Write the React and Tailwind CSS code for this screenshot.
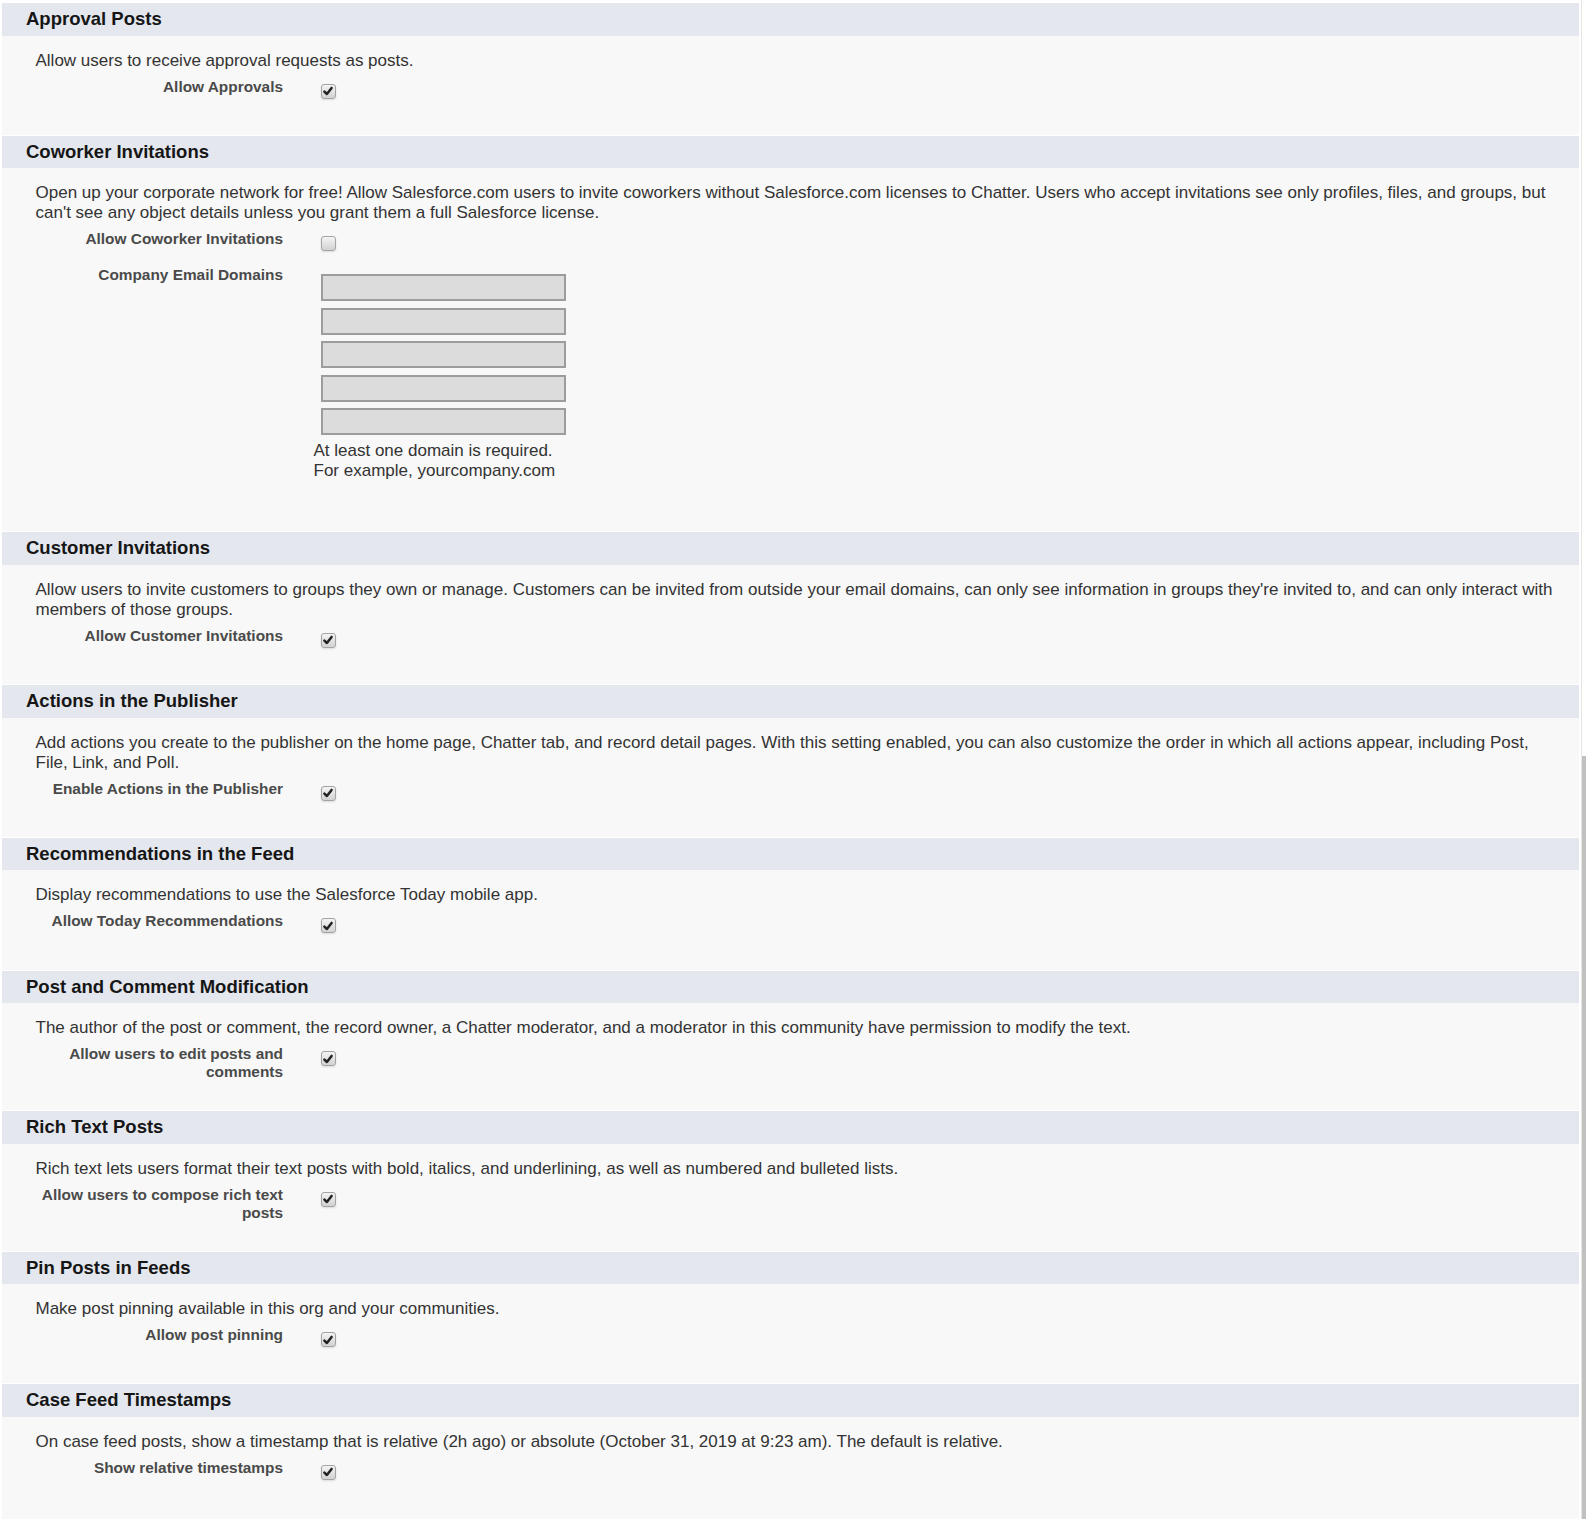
import React from 'react'

const sections = [
  {
    title: 'Approval Posts',
    desc: 'Allow users to receive approval requests as posts.',
    fields: [{ label: 'Allow Approvals', checked: true }],
  },
  {
    title: 'Coworker Invitations',
    desc: "Open up your corporate network for free! Allow Salesforce.com users to invite coworkers without Salesforce.com licenses to Chatter. Users who accept invitations see only profiles, files, and groups, but can't see any object details unless you grant them a full Salesforce license.",
    fields: [
      { label: 'Allow Coworker Invitations', checked: false },
      { label: 'Company Email Domains', domains: true },
    ],
    pb: 'pb-[50px]',
  },
  {
    title: 'Customer Invitations',
    desc: "Allow users to invite customers to groups they own or manage. Customers can be invited from outside your email domains, can only see information in groups they're invited to, and can only interact with members of those groups.",
    fields: [{ label: 'Allow Customer Invitations', checked: true }],
  },
  {
    title: 'Actions in the Publisher',
    desc: 'Add actions you create to the publisher on the home page, Chatter tab, and record detail pages. With this setting enabled, you can also customize the order in which all actions appear, including Post, File, Link, and Poll.',
    fields: [{ label: 'Enable Actions in the Publisher', checked: true }],
  },
  {
    title: 'Recommendations in the Feed',
    desc: 'Display recommendations to use the Salesforce Today mobile app.',
    fields: [{ label: 'Allow Today Recommendations', checked: true }],
  },
  {
    title: 'Post and Comment Modification',
    desc: 'The author of the post or comment, the record owner, a Chatter moderator, and a moderator in this community have permission to modify the text.',
    fields: [{ label: 'Allow users to edit posts and comments', checked: true }],
    pb: 'pb-[29px]',
  },
  {
    title: 'Rich Text Posts',
    desc: 'Rich text lets users format their text posts with bold, italics, and underlining, as well as numbered and bulleted lists.',
    fields: [{ label: 'Allow users to compose rich text posts', checked: true }],
    pb: 'pb-[29px]',
  },
  {
    title: 'Pin Posts in Feeds',
    desc: 'Make post pinning available in this org and your communities.',
    fields: [{ label: 'Allow post pinning', checked: true }],
  },
  {
    title: 'Case Feed Timestamps',
    desc: 'On case feed posts, show a timestamp that is relative (2h ago) or absolute (October 31, 2019 at 9:23 am). The default is relative.',
    fields: [{ label: 'Show relative timestamps', checked: true }],
    pb: 'pb-[36px]',
  },
]

function Checkbox({ checked }) {
  return (
    <span className="mt-[6px] ml-[7px] flex h-[15px] w-[15px] items-center justify-center rounded-[3px] border border-[#a3a3a3] bg-gradient-to-b from-[#f4f4f4] to-[#d2d2d2] shadow-[0_1px_2px_rgba(0,0,0,0.12)]">
      {checked && (
        <svg width="12" height="12" viewBox="0 0 12 12">
          <path d="M2.4 6.6 L4.9 9 L9.6 2.9" fill="none" stroke="#222" strokeWidth="2.5" strokeLinecap="round" strokeLinejoin="round" />
        </svg>
      )}
    </span>
  )
}

function Domains() {
  return (
    <div className="flex flex-col">
      <div className="mt-[8px] ml-[7.5px] flex flex-col gap-[6.5px]">
        {[0, 1, 2, 3, 4].map(i => (
          <div key={i} className="h-[27px] w-[245px] border-2 border-[#9c9c9c] bg-[#dcdcdc]" />
        ))}
      </div>
      <p className="mt-[6px] text-[17px] leading-[20px] text-[#333]">
        At least one domain is required.<br />
        For example, yourcompany.com
      </p>
    </div>
  )
}

function Section({ title, desc, fields, pb = 'pb-[30.25px]' }) {
  return (
    <section className="mb-px">
      <div className="h-[32.5px] bg-[#e4e7ee] pl-[24px] pt-[5px]">
        <h2 className="text-[18.5px] font-bold leading-[21px] text-[#161616]">{title}</h2>
      </div>
      <div className={`bg-[#f8f8f8] pt-[15px] ${pb}`}>
        <p className="pl-[33.5px] pr-[22px] text-[17px] leading-[20px] text-[#333]">{desc}</p>
        <div className="mt-[7px] flex flex-col gap-[9px]">
          {fields.map(f => (
            <div key={f.label} className="flex items-start">
              <div className="w-[281px] shrink-0 pl-[21px] text-right text-[15.4px] font-bold leading-[18px] text-[#4a4a4a]">
                {f.label}
              </div>
              <div className="ml-[30.5px] min-h-[27px]">
                {f.domains ? <Domains /> : <Checkbox checked={f.checked} />}
              </div>
            </div>
          ))}
        </div>
      </div>
    </section>
  )
}

export default function App() {
  return (
    <div className="relative h-[1519px] overflow-hidden bg-white font-['Liberation_Sans',Arial,sans-serif]">
      <div className="pl-[2px] pr-[7px] pt-[3px]">
        {sections.map(s => <Section key={s.title} {...s} />)}
      </div>
      {/* scrollbar */}
      <div className="absolute right-0 top-0 bottom-0 w-[5px] border-l border-[#e6e6e6] bg-white" />
      <div className="absolute right-0 top-[756px] bottom-0 w-[4px] bg-[#c1c1c1]" />
    </div>
  )
}
